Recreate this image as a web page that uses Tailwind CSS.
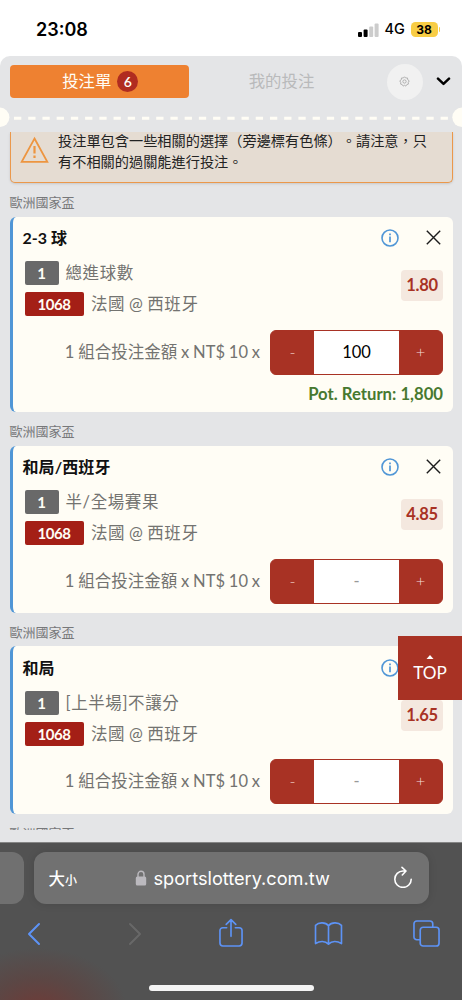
<!DOCTYPE html>
<html lang="zh-TW">
<head>
<meta charset="utf-8">
<meta name="viewport" content="width=device-width, initial-scale=1">
<title>投注單</title>
<script src="https://cdn.jsdelivr.net/npm/@tailwindcss/browser@4"></script>
</head>
<body class="relative flex h-[1000px] w-[462px] flex-col overflow-hidden bg-white font-['Lato','Noto_Sans_CJK_TC',sans-serif] whitespace-nowrap">

<!-- Status bar -->
<header class="flex h-14 shrink-0 items-center justify-between pt-[3px] pr-[22px] pl-[36px] font-['Inter',sans-serif]">
  <span class="text-[18px] font-semibold leading-none text-black">23:08</span>
  <div class="flex items-center">
    <svg class="h-[14px] w-[21px]" viewBox="0 0 21 14">
      <rect x="0" y="9" width="4" height="5" rx="1" fill="#000"/>
      <rect x="5.6" y="6.5" width="4" height="7.5" rx="1" fill="#000"/>
      <rect x="11.2" y="3.4" width="4" height="10.6" rx="1" fill="#ccc"/>
      <rect x="16.6" y="0.5" width="4" height="13.5" rx="1" fill="#ccc"/>
    </svg>
    <span class="ml-[6px] w-[20px] text-[14.5px] font-medium leading-none text-black">4G</span>
    <div class="ml-[6px] flex h-[15px] w-[27px] items-center justify-center rounded-[4.5px] bg-[#f8cd45] text-[12px] font-bold leading-none text-black">38</div>
    <div class="ml-[1px] h-[5px] w-[1.5px] rounded-r bg-[#f8cd45]"></div>
  </div>
</header>

<!-- Bet slip -->
<main class="flex h-[786px] shrink-0 flex-col rounded-t-[10px] bg-[#e4e5e7]">
  <nav class="flex h-[51px] shrink-0 items-center pl-[9.5px]">
    <button class="flex h-[33px] w-[179.5px] items-center justify-center gap-[6px] rounded-[4px] bg-[#ee8131] pl-[2px] text-[16.4px] leading-none text-[#fffdf5]">
      <span>投注單</span>
      <span class="flex size-[21px] items-center justify-center rounded-full bg-[#b02c20] text-[14px] font-semibold">6</span>
    </button>
    <button class="ml-[59px] w-[67px] text-[16.4px] leading-none text-[#b9babb]">我的投注</button>
    <button class="ml-[71.500px] flex size-[36px] items-center justify-center rounded-full bg-[#f1f1f1]">
      <svg class="size-[11px]" viewBox="0 0 22 22" fill="none" stroke="#a2a2a2" stroke-width="1.600" stroke-linejoin="round"><path d="M8.700 4Q11-1 13.300 4 18.500 2 17.500 7.500 23 9.500 18.500 12.500 20.500 17.500 15.500 17.300 14 22.500 11 18.500 8 22.500 6.500 17.300 1.500 17.500 3.500 12.500-1 9.500 4.500 7.500 3.500 2 8.700 4z"/><circle cx="11" cy="11" r="3.300"/></svg>
    </button>
    <svg class="ml-[13.500px] h-[9px] w-[15px]" viewBox="0 0 15 9" fill="none" stroke="#000" stroke-width="2.500" stroke-linecap="round" stroke-linejoin="round"><path d="M2 1.700l5.500 5.200L13 1.700"/></svg>
  </nav>
  <div class="flex h-[24.5px] shrink-0">
    <svg class="h-[21px] w-[462px]" viewBox="0 0 462 21">
      <path d="M14 11.300H448" stroke="#fffdf5" stroke-width="3" stroke-dasharray="7.300 6.920"/>
      <circle cx="-0.300" cy="10.300" r="9.700" fill="#fffdf5"/><circle cx="462" cy="10.300" r="9.700" fill="#fffdf5"/>
    </svg>
  </div>

  <div class="flex h-[698px] shrink-0 flex-col overflow-hidden px-[9.5px]">
    <!-- Notice -->
    <div class="flex h-[51.5px] shrink-0 rounded-b-[5px] border-x-[1.5px] border-b-[1.5px] border-[#eb984b] bg-[#e5dcd2] shadow-sm">
      <svg class="mt-[4px] ml-[9px] h-[28px] w-[29px] shrink-0" viewBox="0 0 29 28" fill="none" stroke="#ed9540" stroke-width="1.800"><path d="M14.500 2.500L27.300 25.800H1.700z"/><path d="M14.500 10v7.500M14.500 19.500v2.500" stroke-width="2.200"/></svg>
      <p class="ml-[9.500px] -mt-[2px] text-[14.200px] leading-[21.500px] text-[#222] [text-spacing-trim:space-all]">投注單包含一些相關的選擇（旁邊標有色條）。請注意，只<br>有不相關的過關能進行投注。</p>
    </div>
    <h2 class="flex h-[33.500px] shrink-0 items-center pt-[5px] text-[13px] leading-none text-[#77787a]">歐洲國家盃</h2>

    <!-- 2-3 球 -->
    <section class="h-[195.500px] shrink-0 rounded-[6px] border-l-[3.500px] border-[#5096d6] bg-[#fffdf5] pr-[9.500px] pl-[10px]">
      <div class="flex h-[42px] items-center">
        <h3 class="grow text-[16px] font-bold leading-none text-[#111]">2-3 球</h3>
        <svg class="size-[18px]" viewBox="0 0 18 18" fill="none" stroke="#5096d6" stroke-width="1.600"><circle cx="9" cy="9" r="8"/><path d="M9 7.600v5.600M9 4.500v1.700" stroke-width="1.700"/></svg>
        <svg class="mr-[2.500px] ml-[27px] size-[15px]" viewBox="0 0 15 15" stroke="#1c1c1c" stroke-width="1.400"><path d="M.8.800l13.400 13.400M14.200.800L.8 14.200"/></svg>
      </div>
      <div class="flex justify-between pl-[2px]">
        <div class="flex flex-col gap-[7px] pt-[2.500px] text-[16.500px] leading-none text-[#737370]">
          <div class="flex h-[24px] items-center gap-[7px]"><span class="flex h-full w-[34px] items-center justify-center rounded-[2px] bg-[#696969] pt-[1px] text-[15px] font-bold text-[#fffdf5]">1</span><span class="tracking-[.6px]">總進球數</span></div>
          <div class="flex h-[24px] items-center gap-[7.500px]"><span class="flex h-full w-[59px] items-center justify-center rounded-[2px] bg-[#a41f16] text-[15px] font-bold tracking-[-.400px] text-[#fffdf5]">1068</span><span class="tracking-[.6px] [word-spacing:-1px]">法國 @ 西班牙</span></div>
        </div>
        <div class="mt-[11px] flex h-[31px] w-[42px] items-center justify-center rounded-[4px] bg-[#f4e8df] text-[16.500px] font-bold leading-none tracking-[-.300px] text-[#a83224]">1.80</div>
      </div>
      <div class="mt-[13.800px] flex h-[45px] items-center justify-end text-[16.500px] leading-none text-[#737370]">
        <span class="mr-[10px] [word-spacing:-.400px]">1 組合投注金額 x NT$ 10 x</span>
        <div class="flex h-full w-[173px] overflow-hidden rounded-[6px] border border-[#a83224] bg-[#a83224]"><span class="flex w-[43px] items-center justify-center font-light text-[#f0d0ca]">-</span><span class="flex w-[85px] items-center justify-center bg-white text-[16.500px] text-black">100</span><span class="flex w-[43px] items-center justify-center font-light text-[#f4dcd7]">+</span></div>
      </div>
      <p class="mt-[11px] text-right text-[16.700px] font-bold leading-none text-[#47792f]">Pot. Return: 1,800</p>
    </section>
    <h2 class="flex h-[33.500px] shrink-0 items-center pt-[4.500px] text-[13px] leading-none text-[#77787a]">歐洲國家盃</h2>

    <!-- 和局/西班牙 -->
    <section class="h-[167px] shrink-0 rounded-[6px] border-l-[3.500px] border-[#5096d6] bg-[#fffdf5] pr-[9.500px] pl-[10px]">
      <div class="flex h-[42px] items-center">
        <h3 class="grow text-[16px] font-bold leading-none tracking-[.100px] text-[#111]">和局/西班牙</h3>
        <svg class="size-[18px]" viewBox="0 0 18 18" fill="none" stroke="#5096d6" stroke-width="1.600"><circle cx="9" cy="9" r="8"/><path d="M9 7.600v5.600M9 4.500v1.700" stroke-width="1.700"/></svg>
        <svg class="mr-[2.500px] ml-[27px] size-[15px]" viewBox="0 0 15 15" stroke="#1c1c1c" stroke-width="1.400"><path d="M.8.800l13.400 13.400M14.200.800L.8 14.200"/></svg>
      </div>
      <div class="flex justify-between pl-[2px]">
        <div class="flex flex-col gap-[7px] pt-[2.500px] text-[16.500px] leading-none text-[#737370]">
          <div class="flex h-[24px] items-center gap-[7px]"><span class="flex h-full w-[34px] items-center justify-center rounded-[2px] bg-[#696969] pt-[1px] text-[15px] font-bold text-[#fffdf5]">1</span><span class="tracking-[.6px]">半/全場賽果</span></div>
          <div class="flex h-[24px] items-center gap-[7.500px]"><span class="flex h-full w-[59px] items-center justify-center rounded-[2px] bg-[#a41f16] text-[15px] font-bold tracking-[-.400px] text-[#fffdf5]">1068</span><span class="tracking-[.6px] [word-spacing:-1px]">法國 @ 西班牙</span></div>
        </div>
        <div class="mt-[11px] flex h-[31px] w-[42px] items-center justify-center rounded-[4px] bg-[#f4e8df] text-[16.500px] font-bold leading-none tracking-[-.300px] text-[#a83224]">4.85</div>
      </div>
      <div class="mt-[13.800px] flex h-[45px] items-center justify-end text-[16.500px] leading-none text-[#737370]">
        <span class="mr-[10px] [word-spacing:-.400px]">1 組合投注金額 x NT$ 10 x</span>
        <div class="flex h-full w-[173px] overflow-hidden rounded-[6px] border border-[#a83224] bg-[#a83224]"><span class="flex w-[43px] items-center justify-center font-light text-[#f0d0ca]">-</span><span class="flex w-[85px] items-center justify-center bg-white text-[#999]">-</span><span class="flex w-[43px] items-center justify-center font-light text-[#f4dcd7]">+</span></div>
      </div>
    </section>
    <h2 class="flex h-[33.500px] shrink-0 items-center pt-[5.500px] text-[13px] leading-none text-[#77787a]">歐洲國家盃</h2>

    <!-- 和局 -->
    <section class="h-[167.500px] shrink-0 rounded-[6px] border-l-[3.500px] border-[#5096d6] bg-[#fffdf5] pr-[9.500px] pl-[10px]">
      <div class="flex h-[43px] items-center">
        <h3 class="grow text-[16px] font-bold leading-none text-[#111]">和局</h3>
        <svg class="size-[18px]" viewBox="0 0 18 18" fill="none" stroke="#5096d6" stroke-width="1.600"><circle cx="9" cy="9" r="8"/><path d="M9 7.600v5.600M9 4.500v1.700" stroke-width="1.700"/></svg>
        <svg class="mr-[2.500px] ml-[27px] size-[15px]" viewBox="0 0 15 15" stroke="#1c1c1c" stroke-width="1.400"><path d="M.8.800l13.400 13.400M14.200.800L.8 14.200"/></svg>
      </div>
      <div class="flex justify-between pl-[2px]">
        <div class="flex flex-col gap-[7px] pt-[2px] text-[16.500px] leading-none text-[#737370]">
          <div class="flex h-[24px] items-center gap-[7px]"><span class="flex h-full w-[34px] items-center justify-center rounded-[2px] bg-[#696969] pt-[1px] text-[15px] font-bold text-[#fffdf5]">1</span><span class="tracking-[.6px]">[上半場]不讓分</span></div>
          <div class="flex h-[24px] items-center gap-[7.500px]"><span class="flex h-full w-[59px] items-center justify-center rounded-[2px] bg-[#a41f16] text-[15px] font-bold tracking-[-.400px] text-[#fffdf5]">1068</span><span class="tracking-[.6px] [word-spacing:-1px]">法國 @ 西班牙</span></div>
        </div>
        <div class="mt-[10.500px] flex h-[31px] w-[42px] items-center justify-center rounded-[4px] bg-[#f4e8df] text-[16.500px] font-bold leading-none tracking-[-.300px] text-[#a83224]">1.65</div>
      </div>
      <div class="mt-[13px] flex h-[45px] items-center justify-end text-[16.500px] leading-none text-[#737370]">
        <span class="mr-[10px] [word-spacing:-.400px]">1 組合投注金額 x NT$ 10 x</span>
        <div class="flex h-full w-[173px] overflow-hidden rounded-[6px] border border-[#a83224] bg-[#a83224]"><span class="flex w-[43px] items-center justify-center font-light text-[#f0d0ca]">-</span><span class="flex w-[85px] items-center justify-center bg-white text-[#999]">-</span><span class="flex w-[43px] items-center justify-center font-light text-[#f4dcd7]">+</span></div>
      </div>
    </section>
    <h2 class="flex h-[33.500px] shrink-0 items-center pt-[7px] text-[13px] leading-none text-[#77787a]">歐洲國家盃</h2>
  </div>
</main>

<!-- Back to top, floating over the list -->
<button class="absolute top-[636px] right-0 flex h-[64px] w-[64px] flex-col items-center bg-[#a83224] pt-[18.500px] text-white">
  <svg class="h-[4px] w-[8px]" viewBox="0 0 8 4"><path d="M4 0l3.500 4h-7z" fill="#fff"/></svg>
  <span class="mt-[5px] text-[17.200px] leading-[17px]">TOP</span>
</button>

<!-- Browser toolbar -->
<footer class="flex h-[158px] shrink-0 flex-col border-t border-[#858585] bg-[#525252] bg-[radial-gradient(ellipse_90px_65px_at_38px_170px,#703a36,#5b4745_55%,#525252)]">
  <div class="mt-[9px] flex h-[52px] shrink-0 gap-[9.500px]">
    <div class="w-[24px] rounded-r-[12px] bg-[#707070]"></div>
    <div class="flex w-[395px] items-center rounded-[12px] bg-[#717171] pl-[15px] text-white shadow-[0_0_8px_rgba(0,0,0,.12)]">
      <div class="flex w-[86px] items-baseline font-['Noto_Sans_CJK_TC',sans-serif] font-medium leading-none"><span class="text-[16.500px]">大</span><span class="text-[12px]">小</span></div>
      <svg class="h-[16px] w-[12px]" viewBox="0 0 12 16"><rect x=".8" y="6.500" width="10.400" height="9" rx="1.500" fill="#bbb9be"/><path d="M3 7V4.300a3 3 0 0 1 6 0V7" fill="none" stroke="#bbb9be" stroke-width="1.400"/></svg>
      <span class="ml-[7px] w-[177px] font-['Inter',sans-serif] text-[18.150px] leading-none">sportslottery.com.tw</span>
      <svg class="ml-[62px] -mt-[3px] h-[22px] w-[20px]" viewBox="0 0 20 22" fill="none" stroke="#fff" stroke-width="1.600" stroke-linecap="round" stroke-linejoin="round"><path d="M11.800 5H10a8.200 8.200 0 1 0 8.200 8.200M9 1.300L13 5 9.300 9"/></svg>
    </div>
  </div>
  <div class="mt-[12.500px] flex h-[34px] shrink-0 items-center text-[#5d93f6]">
    <svg class="ml-[27px] h-[24px] w-[14px]" viewBox="0 0 14 24" fill="none" stroke="currentColor" stroke-width="2" stroke-linecap="round" stroke-linejoin="round"><path d="M12 2L2 12l10 10"/></svg>
    <svg class="ml-[87px] h-[24px] w-[14px] text-[#686868]" viewBox="0 0 14 24" fill="none" stroke="currentColor" stroke-width="2" stroke-linecap="round" stroke-linejoin="round"><path d="M2 2l10 10L2 22"/></svg>
    <svg class="ml-[77px] -mt-[1px] h-[30px] w-[24px]" viewBox="0 0 25 31" fill="none" stroke="currentColor" stroke-width="1.700" stroke-linecap="round" stroke-linejoin="round"><path d="M8 10H4a3 3 0 0 0-3 3v13a3 3 0 0 0 3 3h17a3 3 0 0 0 3-3V13a3 3 0 0 0-3-3h-4M12.500 19V1.500M7.500 6.500l5-5 5 5"/></svg>
    <svg class="ml-[71px] h-[25px] w-[29px]" viewBox="0 0 30 26" fill="none" stroke="currentColor" stroke-width="1.700" stroke-linejoin="round"><path d="M15 5C12 1.200 5 1 1.500 4.500V23.500C6 20.500 11.500 20.500 15 24 18.500 20.500 24 20.500 28.500 23.500V4.500C25 1 18 1.200 15 5zM15 5v19"/></svg>
    <svg class="ml-[70px] h-[27px] w-[27px]" viewBox="0 0 28 28" fill="none" stroke="currentColor" stroke-width="1.700"><rect x="7.500" y="7.500" width="19.500" height="19.500" rx="3"/><path d="M7.500 20.500H4a3 3 0 0 1-3-3V4a3 3 0 0 1 3-3h13.500a3 3 0 0 1 3 3v3.500"/></svg>
  </div>
  <div class="mt-[34px] h-[6.500px] w-[165px] shrink-0 self-center rounded-full bg-[#f4f4f4]"></div>
</footer>
</body>
</html>
